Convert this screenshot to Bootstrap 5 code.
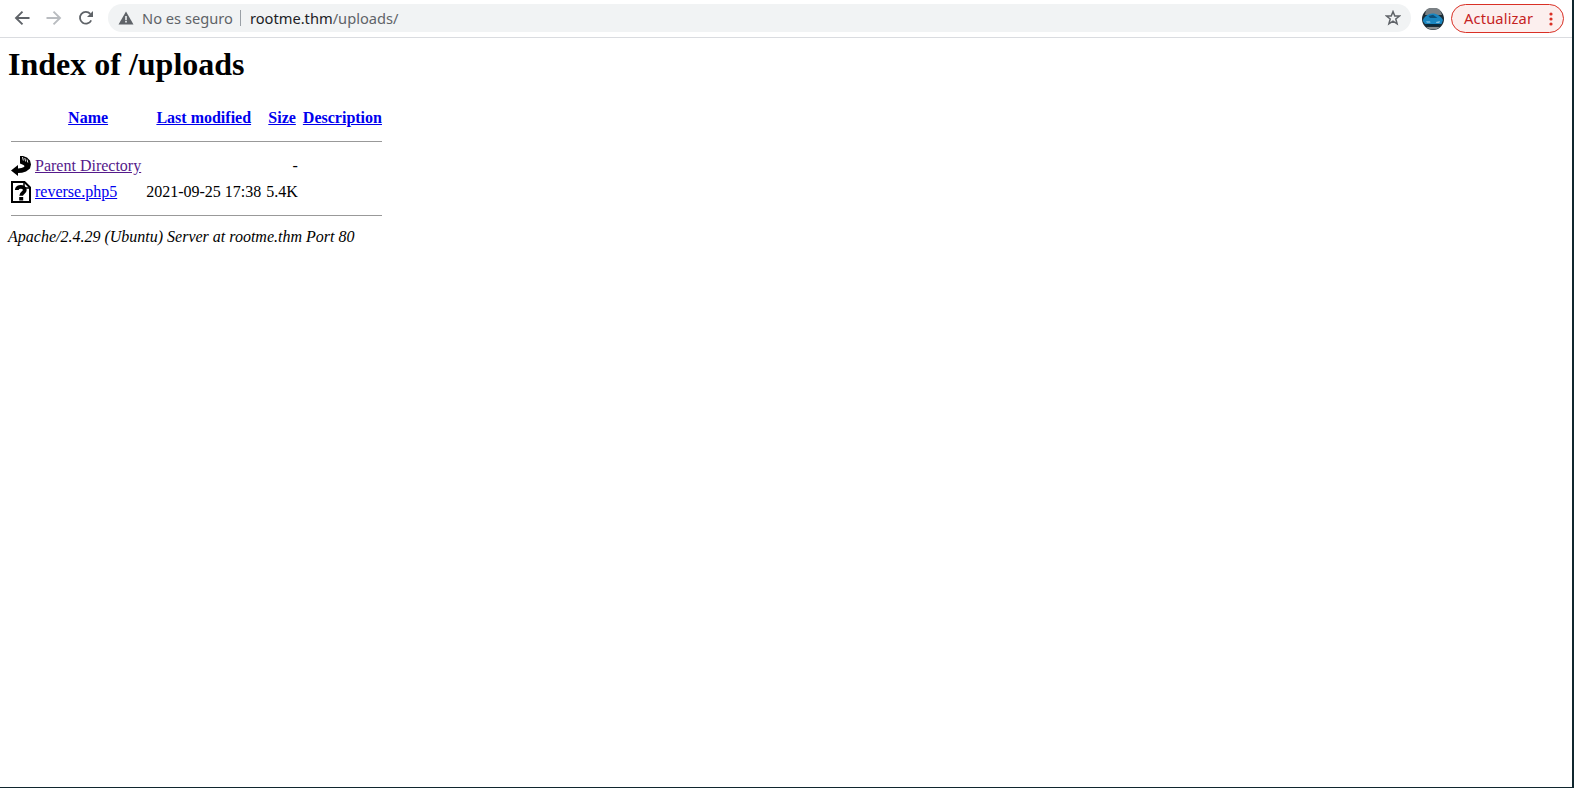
<!DOCTYPE html>
<html lang="en">
<head>
    <meta charset="UTF-8">
    <meta name="viewport" content="width=device-width, initial-scale=1.0">
    <title>Index of /uploads</title>
    <link href="https://cdn.jsdelivr.net/npm/bootstrap@5.3.3/dist/css/bootstrap.min.css" rel="stylesheet">
    <style>
        html, body { height: 100%; }
        body {
            background: #fff;
            color: #000;
            font-family: "Liberation Serif", serif;
            font-size: 16px;
            line-height: normal;
        }
        .window-frame {
            height: 100%;
            border-right: 2px solid #10262e;
            border-bottom: 1px solid #10262e;
        }
        .browser-bar {
            height: 38px;
            padding: 4px 8px 0 6px;
            border-bottom: 1px solid #dadce0;
            font-family: "Noto Sans", "Liberation Sans", sans-serif;
            font-size: 14.67px;
        }
        .bar-btn { width: 32px; height: 28px; }
        .address-box {
            height: 28px;
            margin-left: 6px;
            padding: 0 10px 0 10px;
            border-radius: 14px;
            background: #f1f3f4;
        }
        .not-secure { color: #5f6368; margin-left: 8px; }
        .addr-sep { width: 1px; height: 16px; background: #9aa0a6; margin: 0 9px 0 7px; }
        .addr-host { color: #202124; }
        .addr-path { color: #5f6368; }
        .avatar-pic { margin: 0 7px 0 11px; }
        .update-pill {
            height: 29px;
            width: 113px;
            padding: 0 10px 0 12px;
            border: 1px solid #d93025;
            border-radius: 15px;
            background: #fcefee;
            color: #c5221f;
            letter-spacing: .15px;
        }
        .update-label { padding-bottom: 2px; }
        .page-body { padding: 8px; }
        .page-body h1 {
            font-family: inherit;
            font-size: 32px;
            font-weight: 700;
            line-height: normal;
            margin: 0 0 21px;
        }
        .listing { border-collapse: separate; border-spacing: 2px; }
        .listing th, .listing td { padding: 1px; vertical-align: middle; }
        .listing th { text-align: center; font-weight: 700; }
        .listing .name-col { padding-right: 2px; }
        .listing .size-col { padding-left: 2px; }
        .listing .desc-col { padding-left: 2px; }
        .listing td.num { text-align: right; }
        .listing a { color: #0000ee; text-decoration: underline; }
        .listing a.seen { color: #551a8b; }
        .listing hr {
            margin: 8px 0;
            border: 0;
            border-top: 1px solid #999;
            opacity: 1;
        }
        .listing .rule-top hr { margin-bottom: 9px; }
        .head-row th { height: 24px; }
        .listing svg { display: block; }
        .server-line {
            display: block;
            margin-top: 1px;
            font-style: italic;
        }
    </style>
</head>
<body>
<div class="window-frame d-flex flex-column">
    <div class="browser-bar d-flex align-items-start">
        <div class="bar-btn d-flex align-items-center justify-content-center">
            <svg width="16" height="16" viewBox="0 0 16 16"><path d="M15.500 8H2.500M8.500 1.600 2 8l6.500 6.400" fill="none" stroke="#5f6368" stroke-width="1.900"/></svg>
        </div>
        <div class="bar-btn d-flex align-items-center justify-content-center">
            <svg width="16" height="16" viewBox="0 0 16 16"><path d="M.5 8h13M7.500 1.600 14 8l-6.500 6.400" fill="none" stroke="#b9bcc0" stroke-width="1.900"/></svg>
        </div>
        <div class="bar-btn d-flex align-items-center justify-content-center">
            <svg width="16" height="16" viewBox="0 0 16 16"><path d="M13.200 10.300A5.900 5.900 0 1 1 12.300 3.800" fill="none" stroke="#5f6368" stroke-width="1.800"/><path d="M15 1v6H9z" fill="#5f6368"/></svg>
        </div>
        <div class="address-box flex-grow-1 d-flex align-items-center">
            <svg width="16" height="14" viewBox="0 0 16 14"><path d="M8 .5 15.500 13.500H.5z" fill="#5f6368"/><path d="M7.200 5h1.600v4.200H7.200zM7.200 10h1.600v1.600H7.200z" fill="#f1f3f4"/></svg>
            <span class="not-secure">No es seguro</span>
            <span class="addr-sep"></span>
            <span><span class="addr-host">rootme.thm</span><span class="addr-path">/uploads/</span></span>
            <svg class="ms-auto" width="16" height="16" viewBox="0 0 16 16"><path d="M8 1.600 9.800 6H14.600L10.800 9 12.100 13.900 8 11.200 3.900 13.900 5.200 9 1.400 6H6.200z" fill="none" stroke="#5f6368" stroke-width="1.500"/></svg>
        </div>
        <svg class="avatar-pic mt-1" width="22" height="22" viewBox="0 0 22 22">
            <circle cx="11" cy="11" r="11" fill="#1d2c35"/>
            <path d="M4 2A11 11 0 0 1 18 2L20 7H3z" fill="#7a8084"/>
            <path d="M.8 13C1.500 9 5.500 6 10.500 5.500c4.500 0 8 2.500 10.500 6.500L19.500 16H3z" fill="#1a86c0"/>
            <path d="M6.500 8l4.500-1.200L15.500 10H8z" fill="#0d4f78"/>
            <path d="M4 13.500h4l.5 1H5zM14 14l4-.8-.7 1.500h-3z" fill="#a9d3e8"/>
            <path d="M4 16h14l-1.500 2H6z" fill="#0b2a3b"/>
            <path d="M4 19h14A11 11 0 0 1 4 19z" fill="#8a8f90"/>
        </svg>
        <div class="update-pill d-flex align-items-center justify-content-between">
            <span class="update-label">Actualizar</span>
            <svg width="4" height="14" viewBox="0 0 4 14"><circle cx="2" cy="2" r="1.600" fill="#d93025"/><circle cx="2" cy="7" r="1.600" fill="#d93025"/><circle cx="2" cy="12" r="1.600" fill="#d93025"/></svg>
        </div>
    </div>
    <div class="page-body flex-grow-1">
        <h1>Index of /uploads</h1>
        <table class="listing">
            <tr class="head-row">
                <th></th>
                <th class="name-col"><a href="#">Name</a></th>
                <th><a href="#">Last modified</a></th>
                <th class="size-col"><a href="#">Size</a></th>
                <th class="desc-col"><a href="#">Description</a></th>
            </tr>
            <tr class="rule-top"><th colspan="5"><hr></th></tr>
            <tr>
                <td>
                    <svg width="20" height="22" viewBox="0 0 20 22">
                        <path d="M9 1h3l4 1.500 3 3 1 4-1 4-4 3-4 1.300-4 .2V21L0 15.500 7 10v3.500l3.500-.5 2.500-1 .5-1-1-1-3.500-1.500z" fill="#000"/>
                        <path d="M11.500 2l.8 3.500M13.800 3l.8 3.500M16 4.500l.8 3" stroke="#fff" stroke-width=".9" fill="none"/>
                    </svg>
                </td>
                <td class="name-col"><a class="seen" href="#">Parent Directory</a></td>
                <td>&nbsp;</td>
                <td class="num size-col">-</td>
                <td>&nbsp;</td>
            </tr>
            <tr>
                <td>
                    <svg width="20" height="22" viewBox="0 0 20 22">
                        <path d="M1 1h12.500L19 6.500V21H1z" fill="#fff" stroke="#000" stroke-width="2"/>
                        <path d="M13 1v6h6" fill="none" stroke="#000" stroke-width="1.500"/>
                        <path d="M5.800 9C5.800 4.800 13.800 4.800 13.800 9c0 3-3.600 2.600-3.600 5.800" fill="none" stroke="#000" stroke-width="3.800"/>
                        <path d="M8.200 16h4v3.500H8.200z" fill="#000"/>
                    </svg>
                </td>
                <td class="name-col"><a href="#">reverse.php5</a></td>
                <td class="num">2021-09-25 17:38</td>
                <td class="num size-col">5.4K</td>
                <td>&nbsp;</td>
            </tr>
            <tr><th colspan="5"><hr></th></tr>
        </table>
        <address class="server-line">Apache/2.4.29 (Ubuntu) Server at rootme.thm Port 80</address>
    </div>
</div>
<script src="https://cdn.jsdelivr.net/npm/bootstrap@5.3.3/dist/js/bootstrap.bundle.min.js"></script>
</body>
</html>
